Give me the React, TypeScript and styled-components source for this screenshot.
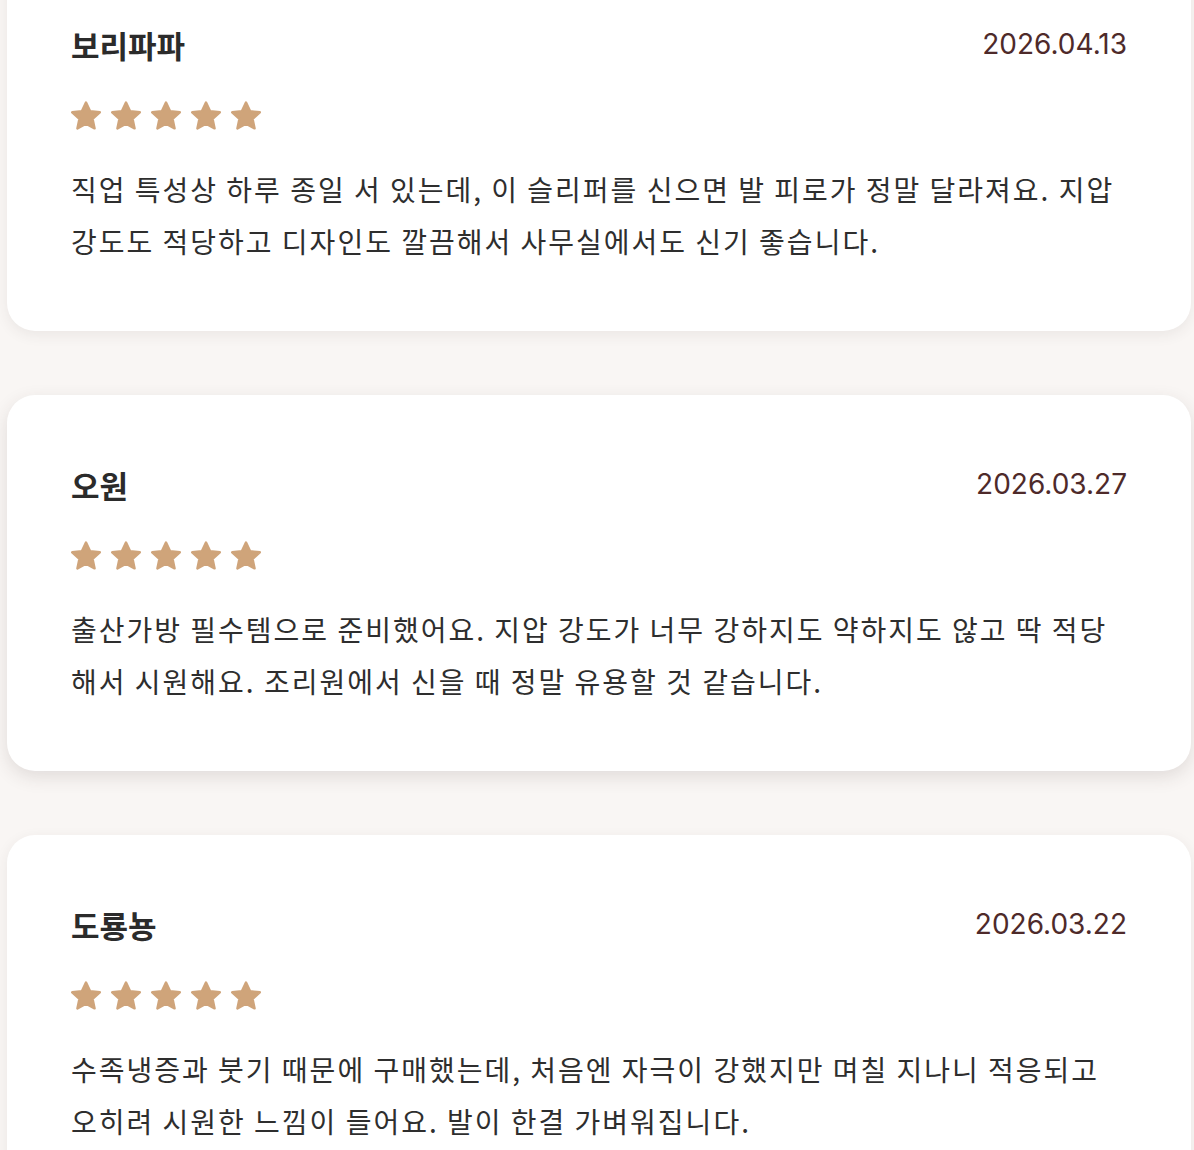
import React from 'react'
import styled, { createGlobalStyle } from 'styled-components'

const GlobalStyle = createGlobalStyle`
  html, body {
    margin: 0;
    padding: 0;
    background: #f9f6f4;
  }
  body {
    font-family: 'Noto Sans CJK KR', 'Noto Sans', sans-serif;
    color: #2e2e2e;
    overflow: hidden;
  }
`

type Review = {
  name: string
  date: string
  rating: number
  body: string
  raised?: boolean
}

const reviews: Review[] = [
  {
    name: '보리파파',
    date: '2026.04.13',
    rating: 5,
    body: '직업 특성상 하루 종일 서 있는데, 이 슬리퍼를 신으면 발 피로가 정말 달라져요. 지압 강도도 적당하고 디자인도 깔끔해서 사무실에서도 신기 좋습니다.',
  },
  {
    name: '오원',
    date: '2026.03.27',
    rating: 5,
    body: '출산가방 필수템으로 준비했어요. 지압 강도가 너무 강하지도 약하지도 않고 딱 적당해서 시원해요. 조리원에서 신을 때 정말 유용할 것 같습니다.',
    raised: true,
  },
  {
    name: '도룡뇽',
    date: '2026.03.22',
    rating: 5,
    body: '수족냉증과 붓기 때문에 구매했는데, 처음엔 자극이 강했지만 며칠 지나니 적응되고 오히려 시원한 느낌이 들어요. 발이 한결 가벼워집니다.',
  },
]

const StarIcon = () => (
  <svg width="30" height="30" viewBox="2.2 2.2 19.6 19.6" aria-hidden="true">
    <path
      d="M12 3.2l2.7 5.7 6.3.7-4.7 4.3 1.3 6.2L12 17l-5.6 3.1 1.3-6.2L3 9.6l6.3-.7z"
      fill="#cfa47a"
      stroke="#cfa47a"
      strokeWidth="1.6"
      strokeLinejoin="round"
    />
  </svg>
)

export default function App() {
  return (
    <>
      <GlobalStyle />
      <ReviewList>
        {reviews.map((review, index) => (
          <ReviewCard key={index} raised={review.raised}>
            <ReviewHeader>
              <ReviewerName>{review.name}</ReviewerName>
              <ReviewDate>{review.date}</ReviewDate>
            </ReviewHeader>
            <StarRow>
              {Array.from({ length: review.rating }).map((_, i) => (
                <StarIcon key={i} />
              ))}
            </StarRow>
            <ReviewBody>{review.body}</ReviewBody>
          </ReviewCard>
        ))}
      </ReviewList>
    </>
  )
}

const ReviewList = styled.div`
  display: flex;
  flex-direction: column;
  gap: 64px;
  margin-top: -45px;
  padding: 0 3px 0 7px;
`

type ReviewCardProps = {
  raised?: boolean
}

const ReviewCard = styled.div<ReviewCardProps>`
  background: #ffffff;
  border-radius: 28px;
  padding: 64px;
  box-shadow: ${({ raised }) =>
    raised
      ? '0 6px 18px rgba(60, 50, 45, 0.13)'
      : '0 4px 14px rgba(60, 50, 45, 0.08)'};
`

const ReviewHeader = styled.div`
  display: flex;
  justify-content: space-between;
  align-items: center;
  height: 50px;
`

const ReviewerName = styled.div`
  font-size: 31px;
  font-weight: 700;
  color: #2b2b2b;
`

const ReviewDate = styled.div`
  font-family: Inter, 'Noto Sans', sans-serif;
  font-size: 28px;
  color: #4e2a2a;
`

const StarRow = styled.div`
  display: flex;
  gap: 10px;
  margin: 32px 0 32px;
  height: 30px;
`

const ReviewBody = styled.p`
  margin: 0;
  font-size: 28px;
  line-height: 52px;
  letter-spacing: 2px;
  color: #2e2e2e;
`
